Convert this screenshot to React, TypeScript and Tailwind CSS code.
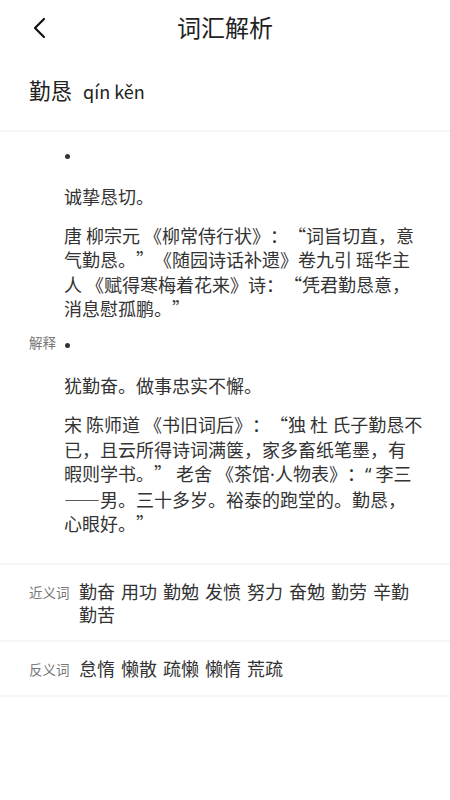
import React from 'react';

const font = { fontFamily: '"Noto Sans CJK SC", "Noto Sans", sans-serif' };

// narrow latin glyph for punctuation that the app shows half-width
const Narrow = ({ children }: { children: React.ReactNode }) => (
  <span className="inline-block font-['Noto_Sans'] leading-[24.5px]">{children}</span>
);

const meanings = [
  {
    brief: '诚挚恳切。',
    detail: (
      <>唐 柳宗元 《柳常侍行状》：“词旨切直，意气勤恳。”《随园诗话补遗》卷九引 瑶华主人 《赋得寒梅着花来》诗：“凭君勤恳意，消息慰孤鹏。”</>
    ),
  },
  {
    brief: '犹勤奋。做事忠实不懈。',
    detail: (
      <>
        宋 陈师道 《书旧词后》：“独 杜 氏子勤恳不已，且云所得诗词满箧，家多畜纸笔墨，有暇则学书。” 老舍 《茶馆
        <Narrow>·</Narrow>人物表》：<Narrow>“</Narrow> 李三 ——男。三十多岁。裕泰的跑堂的。勤恳，心眼好。”
      </>
    ),
  },
];

const synonyms = ['勤奋', '用功', '勤勉', '发愤', '努力', '奋勉', '勤劳', '辛勤', '勤苦'];
const antonyms = ['怠惰', '懒散', '疏懒', '懒惰', '荒疏'];

const WordRow = ({ label, words }: { label: string; words: string[] }) => (
  <div className="flex border-b-2 border-[#f6f6f6] pl-[29px] pr-[24px] pt-[15px] pb-[14px]">
    <div className="w-[50px] shrink-0 pt-[1px] text-[13.5px] leading-[23px] text-[#777]">{label}</div>
    <div className="flex flex-wrap gap-x-[6px] text-[18px] leading-[23px] text-[#333]">
      {words.map((w) => (
        <span key={w}>{w}</span>
      ))}
    </div>
  </div>
);

const App = () => {
  return (
    <div lang="zh-CN" className="min-h-[800px] w-full bg-white [text-spacing-trim:space-all]" style={font}>
      {/* Header */}
      <header className="relative flex h-[54px] items-center justify-center">
        <button className="absolute left-[30px] top-[16px] p-0">
          <svg width="20" height="24" viewBox="0 0 20 24" fill="none">
            <path d="M14 3 L5 12 L14 21" stroke="#111" strokeWidth="2.2" strokeLinecap="round" strokeLinejoin="round" />
          </svg>
        </button>
        <h1 className="text-[24px] font-normal text-[#222]">词汇解析</h1>
      </header>

      {/* Word */}
      <div className="flex items-baseline gap-[11px] border-b-2 border-[#f6f6f6] pl-[29px] pt-[21px] pb-[25px]">
        <span className="text-[21.5px] leading-[30px] text-[#222]">勤恳</span>
        <span className="text-[18px] text-[#222]">qín kěn</span>
      </div>

      {/* Explanation */}
      <div className="flex items-center border-b-2 border-[#f6f6f6] pl-[29px] pr-[27px] pt-[12px] pb-[27px]">
        <div className="w-[35px] shrink-0 pt-[4px] text-[13.5px] text-[#777]">解释</div>
        <div className="flex flex-col gap-[13px] text-[18px] leading-[24.5px] text-[#333]">
          {meanings.map((m, i) => (
            <div key={i}>
              <div className="flex h-[24px] items-center pl-[1px]">
                <span className="h-[5px] w-[5px] rounded-full bg-[#333]" />
              </div>
              <p className="mt-[15.5px]">{m.brief}</p>
              <p className="mt-[14.5px]">{m.detail}</p>
            </div>
          ))}
        </div>
      </div>

      <WordRow label="近义词" words={synonyms} />
      <WordRow label="反义词" words={antonyms} />
    </div>
  );
};

export default App;
